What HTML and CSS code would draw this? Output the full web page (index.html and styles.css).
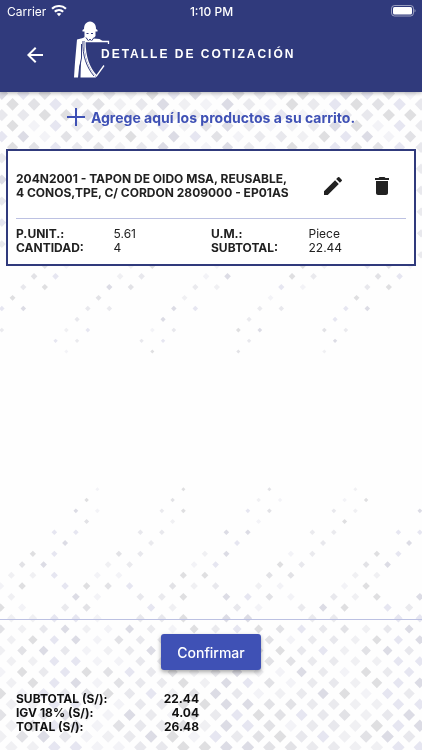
FILE: index.html
```
<!DOCTYPE html>
<html lang="es">
<head>
    <meta charset="UTF-8">
    <meta name="viewport" content="width=device-width, initial-scale=1.0">
    <title>Detalle de cotización</title>
    <link rel="stylesheet" href="styles.css">
</head>
<body>
    <svg id="pattern" class="pattern" viewBox="0 0 422 750" preserveAspectRatio="xMidYMid slice" aria-hidden="true"></svg>

    <div class="screen">
        <header class="header">
            <div class="status-bar">
                <div class="carrier">
                    <span>Carrier</span>
                    <svg width="16" height="12" viewBox="0 0 16 12" fill="#fff">
                        <path d="M8 0C5 0 2.300 1.100.300 3l1.500 1.600a9 9 0 0 1 12.400 0L15.700 3A11 11 0 0 0 8 0z"/>
                        <path d="M8 4c-1.900 0-3.600.700-4.900 1.900l1.500 1.600a5 5 0 0 1 6.800 0l1.500-1.600A7.200 7.200 0 0 0 8 4z"/>
                        <path d="M8 7.900c-.900 0-1.700.300-2.300.900L8 11.300l2.300-2.500c-.600-.600-1.400-.900-2.300-.900z"/>
                    </svg>
                </div>
                <span class="time">1:10 PM</span>
                <div class="battery">
                    <svg width="25" height="12" viewBox="0 0 25 12">
                        <rect x=".5" y=".5" width="22" height="10.500" rx="3" fill="none" stroke="#fff" stroke-opacity=".5"/>
                        <rect x="2" y="2" width="19" height="7.500" rx="1.500" fill="#fff"/>
                        <path d="M23.500 4v3.500c1.400-.500 1.400-3 0-3.500z" fill="#fff" fill-opacity=".5"/>
                    </svg>
                </div>
            </div>
            <div class="app-bar">
                <button type="button" class="back" aria-label="Atrás">
                    <svg width="24" height="24" viewBox="0 0 24 24" fill="#fff">
                        <path d="M20 11H7.830l5.590-5.590L12 4l-8 8 8 8 1.410-1.410L7.830 13H20v-2z"/>
                    </svg>
                </button>
                <svg class="logo" width="38" height="58" viewBox="0 0 38 58">
                    <path fill="#fff" d="M12 9c0-4.500 2-7 6-7.500 4 .500 6 3 6 7.500l1.500 1v1.500h-15V10zM12.500 11h11v5l-2 2.500 6 .500 3 2H12c0 14 4 27 11 34l1 2.500H8.500L9 40l-2 8-1 9.500H2L3 42l2-22.500 6-1.500 1.500-1z"/>
                    <path fill="none" stroke="#303a7c" d="M14.500 13.500h2M19 13.500h2M14 17.500l2.500 3.500 1.500-2 1.500 2 2.500-3.500"/>
                    <path fill="none" stroke="#303a7c" d="M11 21c-1 14 4 27 11 35M9.500 24v14l-2 10v9"/>
                    <path fill="none" stroke="#fff" stroke-width="1.300" d="M12.500 21.500h24V24M13 22c0 15 4 26 11.500 34L32 45.500"/>
                </svg>
                <h1 class="title">DETALLE DE COTIZACIÓN</h1>
            </div>
        </header>

        <main class="content">
            <button type="button" class="add">
                <svg width="18" height="18" viewBox="0 0 18 18" fill="#3f51b5">
                    <path d="M8 0h2v8h8v2h-8v8H8v-8H0V8h8z"/>
                </svg>
                <span>Agrege aquí los productos a su carrito.</span>
            </button>

            <article class="card">
                <div class="card-head">
                    <h2 class="product">204N2001 - TAPON DE OIDO MSA, REUSABLE, 4 CONOS,TPE, C/ CORDON 2809000 - EP01AS</h2>
                    <div class="actions">
                        <button type="button" class="icon-btn" aria-label="Editar">
                            <svg width="24" height="24" viewBox="0 0 24 24" fill="#212121">
                                <path d="M3 17.250V21h3.750L17.810 9.940l-3.750-3.750L3 17.250zM20.710 7.040a1 1 0 0 0 0-1.410l-2.340-2.340a1 1 0 0 0-1.410 0l-1.830 1.830 3.750 3.750 1.830-1.830z"/>
                            </svg>
                        </button>
                        <button type="button" class="icon-btn" aria-label="Eliminar">
                            <svg width="24" height="24" viewBox="0 0 24 24" fill="#212121">
                                <path d="M6 19c0 1.100.9 2 2 2h8c1.100 0 2-.9 2-2V7H6v12zM19 4h-3.500l-1-1h-5l-1 1H5v2h14V4z"/>
                            </svg>
                        </button>
                    </div>
                </div>
                <dl class="details">
                    <dt>P.UNIT.:</dt><dd>5.61</dd>
                    <dt>U.M.:</dt><dd>Piece</dd>
                    <dt>CANTIDAD:</dt><dd>4</dd>
                    <dt>SUBTOTAL:</dt><dd>22.44</dd>
                </dl>
            </article>
        </main>

        <footer class="footer">
            <button type="button" class="confirm">Confirmar</button>
            <table class="totals">
                <tr><th scope="row">SUBTOTAL (S/):</th><td>22.44</td></tr>
                <tr><th scope="row">IGV 18% (S/):</th><td>4.04</td></tr>
                <tr><th scope="row">TOTAL (S/):</th><td>26.48</td></tr>
            </table>
        </footer>
    </div>

    <script src="pattern.js"></script>
</body>
</html>
```
FILE: styles.css
```
* {
    box-sizing: border-box;
}
body {
    margin: 0;
    font-family: Inter, sans-serif;
    background-color: #fefefe;
    color: #212121;
}
button {
    border: none;
    padding: 0;
    background: none;
    font-family: inherit;
    cursor: pointer;
}
svg {
    display: block;
}
.pattern {
    position: fixed;
    top: 0;
    left: 0;
    width: 100%;
    height: 100%;
    z-index: -1;
}
.screen {
    min-height: 100vh;
    display: flex;
    flex-direction: column;
}

/* header */
.header {
    background-color: #303a7c;
    color: #fff;
    box-shadow: 0 1px 4px rgba(0, 0, 0, 0.3);
}
.status-bar {
    display: grid;
    grid-template-columns: 1fr auto 1fr;
    align-items: center;
    height: 22px;
    padding: 0 6px 0 7px;
    font-size: 12px;
}
.carrier {
    display: flex;
    align-items: center;
    gap: 5px;
}
.time {
    font-weight: 500;
}
.battery {
    justify-self: end;
}
.app-bar {
    display: flex;
    align-items: center;
    height: 70px;
    padding: 0 23px 4px;
}
.logo {
    margin-left: 25px;
    margin-bottom: 12px;
}
.title {
    margin: 0 0 2px -9px;
    font-family: "Liberation Sans", Arial, sans-serif;
    font-size: 12px;
    font-weight: bold;
    letter-spacing: 2px;
    white-space: nowrap;
}

/* cart */
.content {
    flex: 1;
    padding: 0 6px;
}
.add {
    display: flex;
    align-items: center;
    justify-content: center;
    gap: 6px;
    width: 100%;
    height: 50px;
    margin-bottom: 7px;
    color: #3f51b5;
    font-size: 14px;
    font-weight: 700;
}
.card {
    padding: 21px 8px 9px;
    border: 2px solid #303a7c;
    background-color: #fff;
}
.card-head {
    display: flex;
    align-items: center;
    padding-bottom: 18px;
    border-bottom: 1px solid #bcc1e2;
}
.product {
    flex: 1;
    margin: 0;
    padding-right: 16px;
    font-size: 12px;
    line-height: 14px;
    font-weight: 700;
}
.actions {
    display: flex;
    gap: 25px;
    padding: 0 12px;
}
.details {
    display: grid;
    grid-template-columns: repeat(4, 1fr);
    margin: 0;
    padding-top: 8px;
    font-size: 12px;
    line-height: 14px;
}
.details dt {
    font-weight: 700;
}
.details dd {
    margin: 0;
}

/* totals */
.footer {
    padding: 14px 16px 16px;
    border-top: 1px solid #bcc1e2;
}
.confirm {
    display: block;
    margin: 0 auto 22px;
    padding: 0 16px;
    height: 36px;
    border-radius: 3px;
    background-color: #3f51b5;
    color: #fff;
    font-size: 14px;
    font-weight: 500;
    box-shadow: 0 2px 4px rgba(0, 0, 0, 0.35);
}
.totals {
    border-collapse: collapse;
    font-size: 12px;
    line-height: 14px;
    color: #111;
}
.totals th {
    width: 133px;
    padding: 0;
    text-align: left;
}
.totals td {
    width: 50px;
    padding: 0;
    font-weight: 700;
    text-align: right;
}
```
FILE: pattern.js
```
// Diamond lattice that fades towards the middle of the screen
const STEP = 10.75;
const svg = document.getElementById('pattern');
const colors = ['#dcdce5', '#e2e2e6', '#eaeaee', '#f0f0f3', '#e6e6f1', '#f3f3f7', '#e8e8ed', '#dfdfe1'];

// columns of the sparse rows, from the innermost row outwards
const upperRows = [
    [6, 14, 22, 30],
    [5, 7, 13, 15, 23, 31],
    [0, 6, 8, 14, 16, 22, 24, 30, 32],
    [7, 15, 23, 31],
    [0, 2, 8, 10, 16, 18, 24, 26, 32, 34],
    [1, 9, 17, 25, 33],
    [2, 4, 10, 12, 18, 20, 26, 28, 34, 36],
    [3, 5, 11, 13, 19, 21, 27, 29, 35, 37],
    [4, 6, 12, 14, 20, 28, 30, 34, 36, 38]
];
const lowerRows = [
    [9, 17, 25, 33],
    [8, 16, 24, 26, 32, 34],
    [7, 9, 15, 17, 23, 25, 31, 33, 39],
    [8, 16, 24, 32],
    [5, 7, 13, 15, 21, 23, 29, 31, 37, 39],
    [6, 14, 22, 30, 38],
    [3, 5, 11, 13, 19, 21, 27, 29, 35, 37],
    [2, 4, 10, 12, 18, 20, 26, 28, 34, 36],
    [1, 3, 5, 9, 11, 17, 19, 25, 27, 33, 35],
    [0, 2, 6, 8, 10, 12, 16, 18, 20, 24, 26, 32, 34],
    [1, 7, 9, 13, 15, 17, 21, 23, 25, 27, 31, 33, 35, 39],
    [0, 2, 6, 8, 14, 16, 22, 24, 28, 30, 32, 36, 38],
    [1, 3, 5, 7, 9, 13, 15, 17, 21, 23, 29, 31, 37, 39]
];

function drawRows(rows, count, x0, y0, direction, parity) {
    for (let row = 0; row < count; row++) {
        const y = y0 + direction * row * STEP;
        const radius = Math.min(6.3, 2 + row * 0.19);
        for (let col = 0; col < 41; col++) {
            if (rows[row] ? !rows[row].includes(col) : (row + col) % 2 !== parity) {
                continue;
            }
            const x = x0 + col * STEP;
            const path = document.createElementNS('http://www.w3.org/2000/svg', 'path');
            path.setAttribute('d', `M${x} ${y - radius}l${radius} ${radius}l${-radius} ${radius}l${-radius} ${-radius}z`);
            path.setAttribute('fill', colors[(col * col * 3 + row * 5 + col * row * 7 + (col >> 2)) % colors.length]);
            svg.appendChild(path);
        }
    }
}

drawRows(upperRows, 26, 1.8, 351.6, -1, 0);
drawRows(lowerRows, 26, 0.6, 489.3, 1, 1);
```
